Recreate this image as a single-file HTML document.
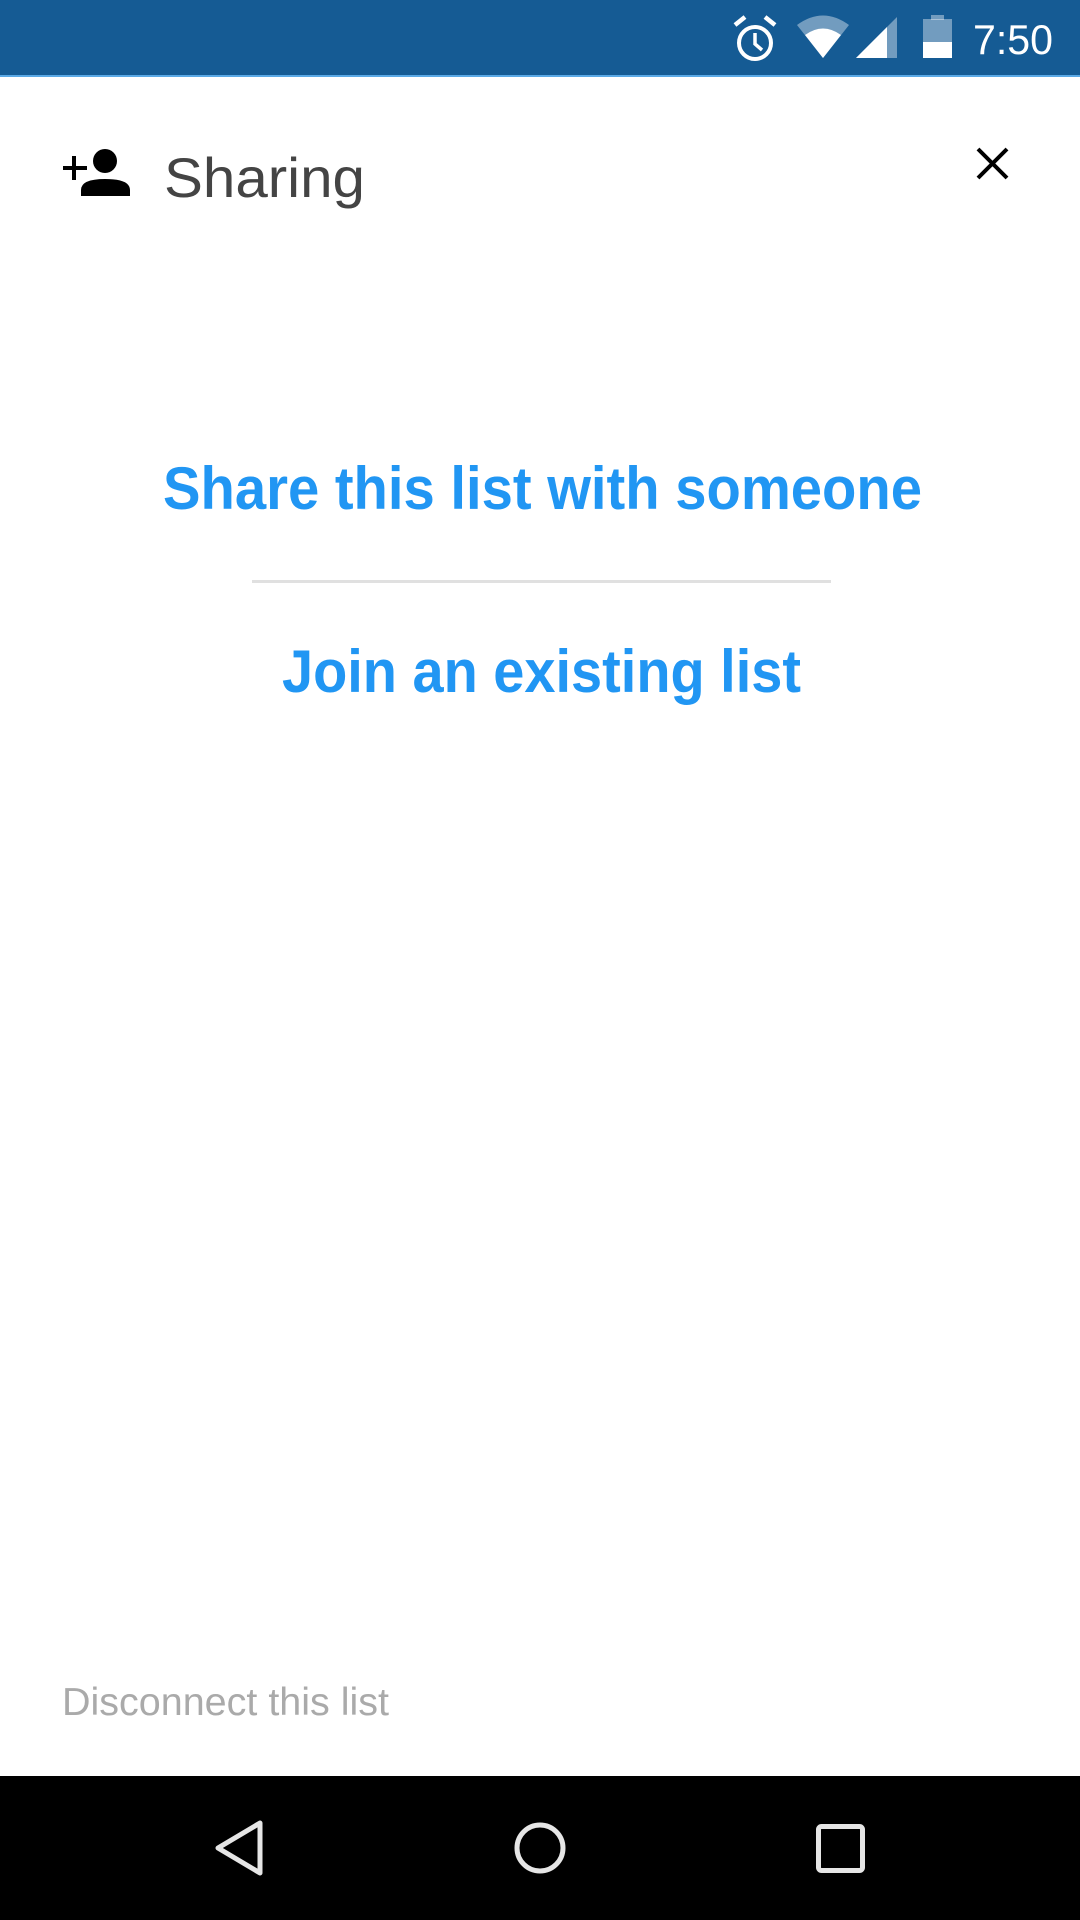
<!DOCTYPE html>
<html><head><meta charset="utf-8"><style>
html,body{margin:0;padding:0;width:1080px;height:1920px;overflow:hidden;background:#fff}
svg{display:block}
</style></head><body>
<svg width="1080" height="1920" viewBox="0 0 1080 1920" xmlns="http://www.w3.org/2000/svg">
<rect x="0" y="0" width="1080" height="76" fill="#155b94"/>
<rect x="0" y="75" width="1080" height="2" fill="#5aa9e6"/>
<circle cx="755" cy="43" r="16" fill="none" stroke="#fff" stroke-width="4"/>
<path d="M755 33 V44 L762 50" fill="none" stroke="#fff" stroke-width="3.5"/>
<path d="M735 25 L745 17 M775 25 L765 17" stroke="#fff" stroke-width="4.5"/>
<path d="M797 25 Q823 6 849 25 L823 58 Z" fill="#fff" fill-opacity="0.4"/>
<path d="M805 35 Q823 22 841 35 L823 58 Z" fill="#fff"/>
<path d="M856 58 L897 17 L897 58 Z" fill="#fff" fill-opacity="0.4"/>
<path d="M856 58 L887 27 L887 58 Z" fill="#fff"/>
<rect x="931" y="15" width="13" height="5" fill="#fff" fill-opacity="0.4"/>
<rect x="923" y="19" width="29" height="23" fill="#fff" fill-opacity="0.4"/>
<rect x="923" y="42" width="29" height="16" fill="#fff"/>
<text x="973" y="54" font-family="Liberation Sans, sans-serif" font-size="42" fill="#fff" textLength="80" lengthAdjust="spacingAndGlyphs">7:50</text>
<circle cx="105" cy="161" r="12" fill="#000"/>
<path d="M81 196 L81 190 Q81 179 105 179 Q130 179 130 190 L130 196 Z" fill="#000"/>
<rect x="63" y="166" width="24" height="4" fill="#000"/>
<rect x="72" y="156" width="4" height="24" fill="#000"/>
<text x="164" y="197" font-family="Liberation Sans, sans-serif" font-size="56" fill="#444" textLength="201" lengthAdjust="spacingAndGlyphs">Sharing</text>
<path d="M978 149 L1007 178 M1007 149 L978 178" stroke="#000" stroke-width="4"/>
<text x="163" y="509" font-family="Liberation Sans, sans-serif" font-weight="bold" font-size="60" fill="#2196f3" textLength="759" lengthAdjust="spacingAndGlyphs">Share this list with someone</text>
<rect x="252" y="580" width="579" height="3" fill="#e0e0e0"/>
<text x="282" y="692" font-family="Liberation Sans, sans-serif" font-weight="bold" font-size="60" fill="#2196f3" textLength="519" lengthAdjust="spacingAndGlyphs">Join an existing list</text>
<text x="62" y="1715" font-family="Liberation Sans, sans-serif" font-size="39" fill="#aaa" textLength="327" lengthAdjust="spacingAndGlyphs">Disconnect this list</text>
<rect x="0" y="1776" width="1080" height="144" fill="#000"/>
<path d="M260 1823 L218 1848 L260 1873 Z" fill="none" stroke="#e6e6e6" stroke-width="5" stroke-linejoin="round"/>
<circle cx="540" cy="1848" r="23" fill="none" stroke="#e6e6e6" stroke-width="5"/>
<rect x="818.5" y="1826.5" width="44" height="44" rx="3" fill="none" stroke="#e6e6e6" stroke-width="5"/>
</svg>
</body></html>
